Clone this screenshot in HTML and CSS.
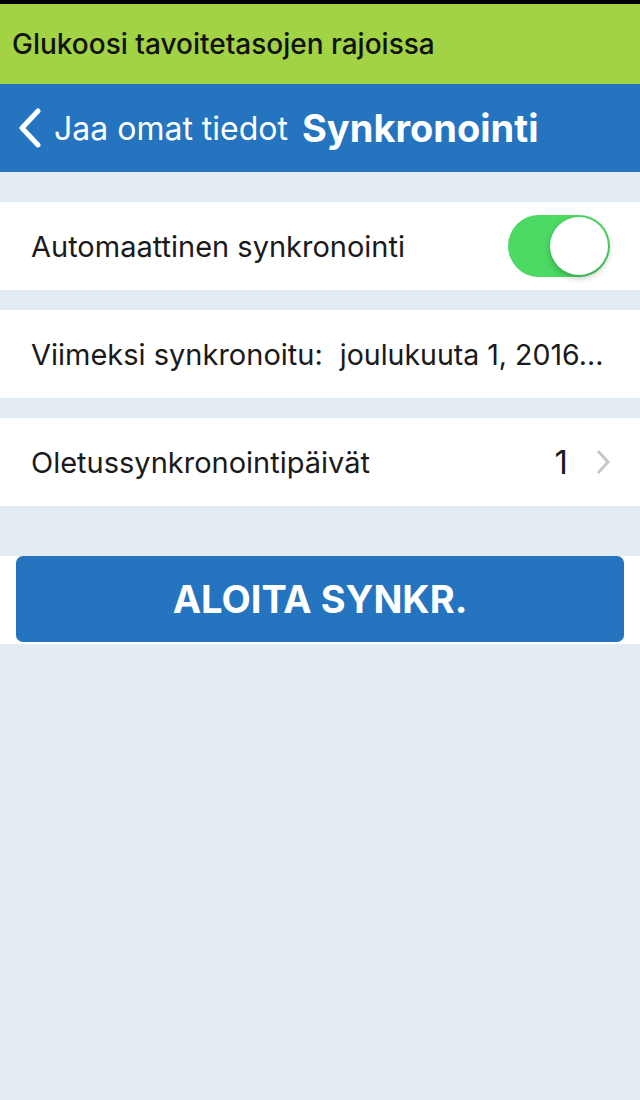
FILE: index.html
```html
<!DOCTYPE html>
<html>
<head>
<meta charset="utf-8">
<link rel="stylesheet" href="styles.css">
</head>
<body>
<div class="status"></div>
<div class="banner">Glukoosi tavoitetasojen rajoissa</div>
<div class="nav">
  <svg class="back" width="28" height="40" viewBox="0 0 28 40"><path d="M22 3 L6 20 L22 37" fill="none" stroke="#fff" stroke-width="5" stroke-linecap="round" stroke-linejoin="round"/></svg>
  <span class="back-label">Jaa omat tiedot</span>
  <span class="title">Synkronointi</span>
</div>
<div class="content">
  <div class="row">
    <span class="label">Automaattinen synkronointi</span>
    <div class="toggle"><div class="knob"></div></div>
  </div>
  <div class="row">
    <span class="label-fixed">Viimeksi synkronoitu:</span>
    <span class="value">joulukuuta 1, 2016...</span>
  </div>
  <div class="row">
    <span class="label">Oletussynkronointipäivät</span>
    <span class="num">1</span>
    <svg class="chev" width="16" height="26" viewBox="0 0 16 26"><path d="M3 2 L13 13 L3 24" fill="none" stroke="#c7c7cc" stroke-width="3"/></svg>
  </div>
  <div class="btn-band">
    <div class="btn">ALOITA SYNKR.</div>
  </div>
</div>
</body>
</html>
```
FILE: styles.css
```css
html, body {
  margin: 0;
  padding: 0;
}
body {
  width: 640px;
  height: 1100px;
  background: #e3ebf3;
  font-family: Inter, "Liberation Sans", sans-serif;
  overflow: hidden;
}
.status {
  height: 4px;
  background: #000;
}
.banner {
  height: 80px;
  background: #a1d345;
  color: #111;
  font-size: 28px;
  font-weight: 500;
  padding-left: 12px;
  display: flex;
  align-items: center;
}
.nav {
  height: 88px;
  background: #2474bf;
  color: #fff;
  display: flex;
  align-items: center;
  padding-left: 16px;
}
.back {
  margin-right: 10px;
}
.back-label {
  font-size: 32px;
  margin-right: 14px;
}
.title {
  font-size: 38px;
  font-weight: bold;
}
.content {
  padding-top: 30px;
  display: flex;
  flex-direction: column;
  gap: 20px;
}
.row {
  height: 88px;
  background: #fff;
  display: flex;
  align-items: center;
  padding: 0 30px 0 31px;
  color: #1a1a1a;
  font-size: 29px;
}
.label {
  flex: 1;
}
.label-fixed {
  margin-right: 17px;
  white-space: nowrap;
}
.value {
  white-space: nowrap;
  font-size: 28.5px;
}
.toggle {
  width: 102px;
  height: 62px;
  border-radius: 31px;
  background: #4cd964;
  display: flex;
  justify-content: flex-end;
  align-items: center;
  padding: 2px;
  box-sizing: border-box;
}
.knob {
  width: 58px;
  height: 58px;
  border-radius: 50%;
  background: #fff;
  box-shadow: 0 3px 6px rgba(0,0,0,0.25);
}
.num {
  font-size: 33px;
  margin-right: 27px;
}
.chev {
  margin-right: -1px;
}
.btn-band {
  margin-top: 30px;
  background: #fff;
  padding: 0 16px 2px;
}
.btn {
  height: 86px;
  background: #2474bf;
  border-radius: 7px;
  color: #fff;
  font-size: 38px;
  font-weight: bold;
  display: flex;
  align-items: center;
  justify-content: center;
}
```
